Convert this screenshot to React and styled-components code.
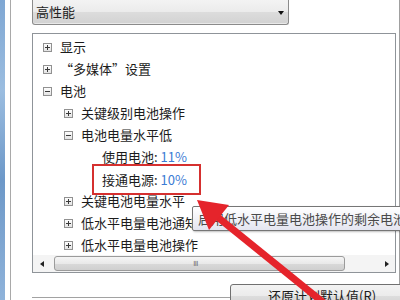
import styled, { createGlobalStyle } from "styled-components";

const GlobalStyle = createGlobalStyle`
  html, body {
    margin: 0;
    width: 400px;
    height: 300px;
    overflow: hidden;
    background: #fff;
  }
  body {
    font-family: "Noto Sans CJK SC", "Noto Sans", sans-serif;
    font-size: 13px;
    color: #1c1c1c;
  }
`;

const TREE = [
  { level: 0, kind: "plus", label: "显示" },
  { level: 0, kind: "plus", label: "“多媒体”设置" },
  { level: 0, kind: "minus", label: "电池" },
  { level: 1, kind: "plus", label: "关键级别电池操作" },
  { level: 1, kind: "minus", label: "电池电量水平低" },
  { level: 2, kind: "leaf", label: "使用电池:", value: "11%" },
  { level: 2, kind: "leaf", label: "接通电源:", value: "10%", marked: true },
  { level: 1, kind: "plus", label: "关键电池电量水平" },
  { level: 1, kind: "plus", label: "低水平电量电池通知" },
  { level: 1, kind: "plus", label: "低水平电量电池操作" },
];

// 展开/折叠 小方块
function Expander({ kind }) {
  if (kind === "leaf") return <St.ExpanderSpace />;
  return (
    <svg width="9" height="9" viewBox="0 0 9 9">
      <defs>
        <linearGradient id="exp" x1="0" y1="0" x2="0" y2="1">
          <stop offset="0" stopColor="#ffffff" />
          <stop offset="1" stopColor="#e2e2e2" />
        </linearGradient>
      </defs>
      <rect x="0.5" y="0.5" width="8" height="8" fill="url(#exp)" stroke="#919191" />
      <path d="M2 4.5h5" stroke="#3a3a3a" />
      {kind === "plus" && <path d="M4.5 2v5" stroke="#3a3a3a" />}
    </svg>
  );
}

function App() {
  const rows = TREE.map((item, idx) => {
    const text = (
      <>
        {item.label}
        {item.value && (
          <>
            {" "}
            <St.Value>{item.value}</St.Value>
          </>
        )}
      </>
    );
    return (
      <St.Row key={idx} $level={item.level}>
        <Expander kind={item.kind} />
        {item.marked ? <St.Marked>{text}</St.Marked> : <St.Label>{text}</St.Label>}
      </St.Row>
    );
  });

  return (
    <>
      <GlobalStyle />
      <St.Window>
        <St.DesktopEdge />
        <St.Frame>
          <St.Select>
            <St.SelectText>高性能</St.SelectText>
            <St.SelectArrow />
          </St.Select>

          <St.Tree>
            <St.TreeBody>{rows}</St.TreeBody>
            <St.HScroll>
              <St.ScrollButton>
                <St.ArrowLeft />
              </St.ScrollButton>
              <St.Track>
                <St.Thumb>
                  <St.Grip>III</St.Grip>
                </St.Thumb>
              </St.Track>
              <St.ScrollButton>
                <St.ArrowRight />
              </St.ScrollButton>
            </St.HScroll>
          </St.Tree>

          <St.Footer>
            <St.Button>还原计划默认值(R)</St.Button>
          </St.Footer>
        </St.Frame>

        <St.Tooltip>启用低水平电量电池操作的剩余电池电量百分比</St.Tooltip>

        {/* 红色标注箭头 */}
        <St.Overlay width="400" height="300" viewBox="0 0 400 300">
          <line x1="215" y1="215" x2="335" y2="312" stroke="#e5242b" strokeWidth="7" />
          <polygon points="197,200 229,205 209,230" fill="#e5242b" />
        </St.Overlay>
      </St.Window>
    </>
  );
}

export default App;

const St = {
  Window: styled.div`
    position: relative;
    display: flex;
    width: 400px;
    height: 300px;
    overflow: hidden;
  `,

  DesktopEdge: styled.div`
    width: 5px;
    flex: none;
    background: linear-gradient(180deg, #7fa7d3, #9bbde0 30%, #6d98c8 60%, #8fb3da);
  `,

  Frame: styled.div`
    flex: 1;
    display: flex;
    flex-direction: column;
    margin-left: 5px;
    padding: 0 3px 0 21px;
    border-left: 1px solid #a9a9a9;
    border-right: 1px solid #a0a0a0;
    background: #fff;
    min-width: 0;
  `,

  /* 电源计划下拉框 */
  Select: styled.div`
    display: flex;
    align-items: center;
    justify-content: space-between;
    width: 257px;
    height: 25px;
    box-sizing: border-box;
    padding: 0 4px 1px 3px;
    border: 1px solid #8b8b8b;
    border-top: none;
    border-radius: 0 0 3px 3px;
    background: linear-gradient(180deg, #f3f3f3 0%, #ebebeb 50%, #dcdcdc 51%, #d2d2d2 100%);
    box-shadow: inset 0 -1px 0 #e9e9e9;
  `,

  SelectText: styled.span`
    color: #222;
    font-size: 13px;
  `,

  SelectArrow: styled.span`
    width: 0;
    height: 0;
    margin-top: 2px;
    border-left: 3.5px solid transparent;
    border-right: 3.5px solid transparent;
    border-top: 4px solid #111;
  `,

  /* 设置树 */
  Tree: styled.div`
    display: flex;
    flex-direction: column;
    height: 240px;
    margin-top: 8px;
    box-sizing: border-box;
    border: 1px solid #8f9499;
    background: #fff;
  `,

  TreeBody: styled.div`
    flex: 1;
    padding-top: 2px;
    overflow: hidden;
  `,

  Row: styled.div`
    display: flex;
    align-items: center;
    gap: 8px;
    height: 22px;
    padding-left: ${({ $level }) => 10 + $level * 21}px;
    white-space: nowrap;
  `,

  ExpanderSpace: styled.span`
    width: 9px;
    flex: none;
  `,

  Label: styled.span`
    line-height: 22px;
  `,

  Marked: styled.span`
    display: inline-block;
    box-sizing: border-box;
    width: 109px;
    height: 31px;
    margin-left: -10px;
    padding-left: 8px;
    border: 2px solid #d5302f;
    line-height: 27px;
  `,

  Value: styled.span`
    color: #3b7bd4;
  `,

  HScroll: styled.div`
    display: flex;
    height: 17px;
    background: #f4f4f4;
    border-top: 1px solid #fff;
  `,

  ScrollButton: styled.div`
    display: flex;
    align-items: center;
    justify-content: center;
    width: 17px;
    flex: none;
  `,

  ArrowLeft: styled.span`
    border-top: 3.5px solid transparent;
    border-bottom: 3.5px solid transparent;
    border-right: 4px solid #222;
  `,

  ArrowRight: styled.span`
    border-top: 3.5px solid transparent;
    border-bottom: 3.5px solid transparent;
    border-left: 4px solid #222;
  `,

  Track: styled.div`
    flex: 1;
    display: flex;
    padding: 1px 33px 1px 4px;
  `,

  Thumb: styled.div`
    flex: 1;
    display: flex;
    align-items: center;
    justify-content: center;
    border: 1px solid #9b9b9b;
    border-radius: 3px;
    background: linear-gradient(180deg, #f5f5f5 0%, #e9e9e9 50%, #d9d9d9 51%, #cfcfcf 100%);
  `,

  Grip: styled.span`
    font-family: "DejaVu Sans", sans-serif;
    font-size: 7px;
    letter-spacing: -0.5px;
    color: #6b6b6b;
    margin-left: -8px;
  `,

  Footer: styled.div`
    height: 25px;
    padding: 11px 0 0 198px;
    box-sizing: border-box;
    border-bottom: 1px solid #a2a2a2;
    overflow: visible;
  `,

  Button: styled.div`
    width: 186px;
    height: 24px;
    box-sizing: border-box;
    padding-left: 37px;
    border: 1px solid #707070;
    border-radius: 3px;
    background: linear-gradient(180deg, #f3f3f3 0%, #ebebeb 50%, #dddddd 51%, #cfcfcf 100%);
    font-size: 13px;
    line-height: 22px;
    color: #1c1c1c;
    white-space: nowrap;
  `,

  Tooltip: styled.div`
    position: absolute;
    left: 192px;
    top: 206px;
    height: 23px;
    padding: 0 6px 0 5px;
    border: 1px solid #767676;
    border-radius: 2px;
    background: linear-gradient(180deg, #ffffff, #e4e5f0);
    box-shadow: 1px 1px 2px rgba(0, 0, 0, 0.25);
    line-height: 23px;
    white-space: nowrap;
    color: #4a4a4a;
  `,

  Overlay: styled.svg`
    position: absolute;
    left: 0;
    top: 0;
    pointer-events: none;
  `,
};
